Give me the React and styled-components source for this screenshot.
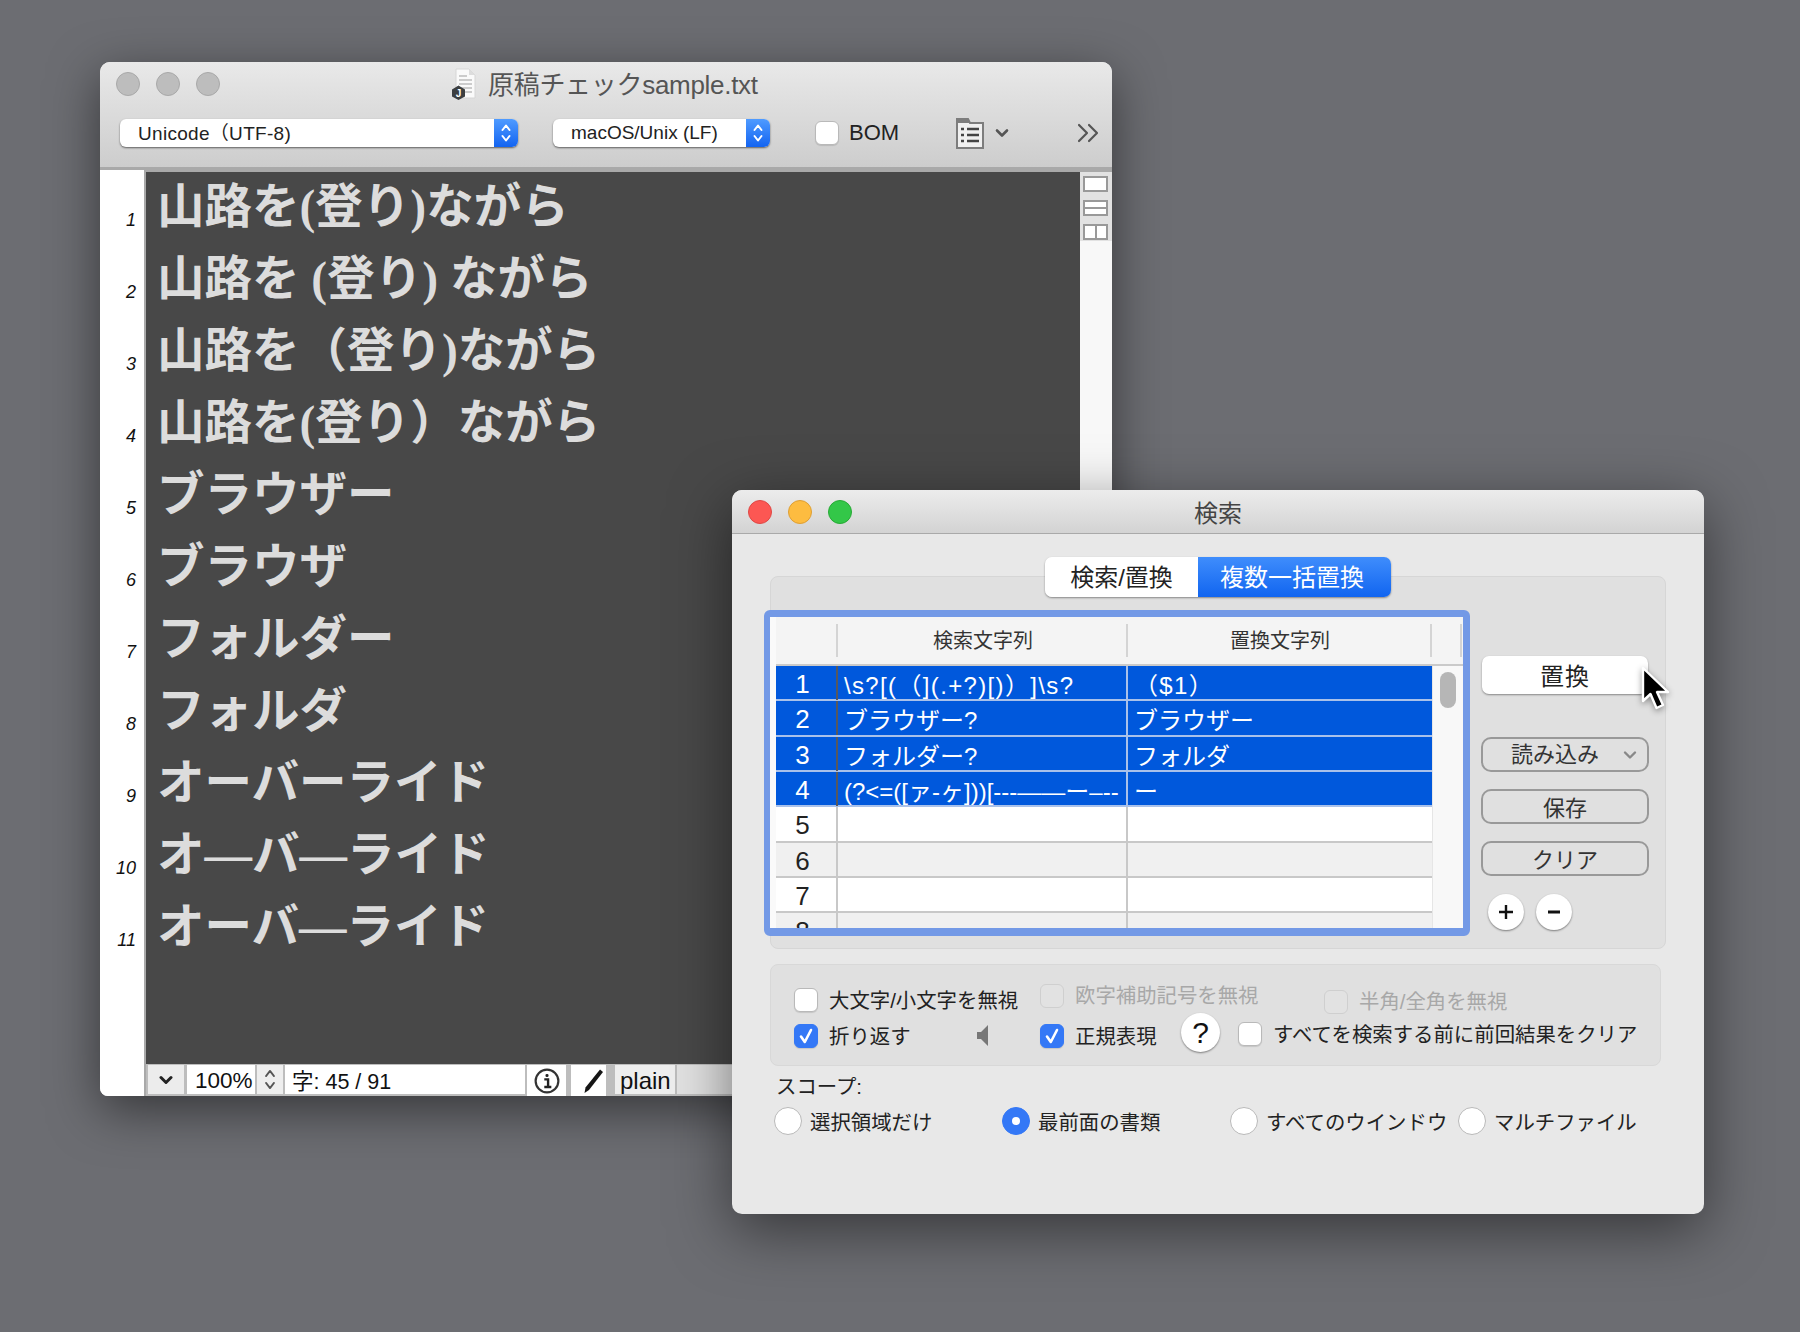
import React from "react";
import styled, { createGlobalStyle } from "styled-components";

const UI = `"Liberation Sans", "Noto Sans CJK JP", sans-serif`;

const Global = createGlobalStyle`
  html, body { margin: 0; padding: 0; background: #6c6d72; }
  * { box-sizing: border-box; text-spacing-trim: space-all; }
`;

const Stage = styled.div`
  position: relative;
  width: 1800px;
  height: 1332px;
  overflow: hidden;
  background: #6c6d72;
  font-family: ${UI};
  color: #222;
`;

/* ---------- main editor window ---------- */
const MainWindow = styled.div`
  position: absolute;
  left: 100px;
  top: 62px;
  width: 1012px;
  height: 1034px;
  display: flex;
  flex-direction: column;
  border-radius: 10px 10px 8px 8px;
  overflow: hidden;
  background: #f4f4f4;
`;
const MainShadow = styled.div`
  position: absolute;
  left: 100px;
  top: 62px;
  width: 1012px;
  height: 1034px;
  border-radius: 10px;
  box-shadow: 0 14px 50px rgba(0, 0, 0, 0.5);
`;
const Chrome = styled.div`
  height: 108px;
  flex: none;
  background: linear-gradient(#e9e9e9, #cdcdcd);
  border-bottom: 3px solid #a9a9a9;
`;
const TitleRow = styled.div`
  position: relative;
  height: 44px;
`;
const Lights = styled.div`
  position: absolute;
  left: 16px;
  top: 10px;
  display: flex;
  gap: ${(p) => p.$gap}px;
`;
const Light = styled.span`
  width: 24px;
  height: 24px;
  border-radius: 50%;
  background: ${(p) => p.$c};
  border: 1px solid ${(p) => p.$b};
`;
const TitleIcon = styled.svg`
  position: absolute;
  left: 351px;
  top: 6px;
`;
const TitleText = styled.div`
  position: absolute;
  left: 388px;
  top: 6px;
  font-size: 26px;
  line-height: 34px;
  letter-spacing: -0.3px;
  color: #555;
  white-space: nowrap;
`;
const Toolbar = styled.div`
  height: 54px;
  padding-left: 20px;
  display: flex;
  align-items: center;
`;
const Popup = styled.div`
  width: ${(p) => p.$w}px;
  height: 28px;
  margin-left: ${(p) => p.$ml || 0}px;
  flex: none;
  display: flex;
  align-items: center;
  justify-content: space-between;
  padding-left: 18px;
  background: #fff;
  border-radius: 6px;
  box-shadow: 0 1px 2px rgba(0, 0, 0, 0.55);
  font-size: 19px;
  color: #222;
  white-space: nowrap;
  overflow: hidden;
`;
const PopupText = styled.span`
  position: relative;
  top: ${(p) => p.$dy || 0}px;
  letter-spacing: ${(p) => p.$ls || 0}px;
`;
const Stepper = styled.span`
  width: 24px;
  height: 100%;
  display: flex;
  align-items: center;
  justify-content: center;
  background: linear-gradient(#4f9bff, #1364f1);
`;
const Check = styled.span`
  width: 24px;
  height: 24px;
  flex: none;
  display: flex;
  align-items: center;
  justify-content: center;
  border-radius: 6px;
  background: ${(p) => (p.$on ? "#3478f6" : p.$off ? "#e2e2e2" : "#fff")};
  border: 1px solid ${(p) => (p.$on ? "#3478f6" : p.$off ? "#cfcfcf" : "#b9b9b9")};
  box-shadow: ${(p) => (p.$off ? "none" : "0 1px 1px rgba(0,0,0,.12)")};
`;
const BomWrap = styled.div`
  margin-left: 45px;
  display: flex;
  align-items: center;
  gap: 10px;
  font-size: 22px;
  color: #222;
`;
const ToolIcon = styled.svg`
  margin-left: ${(p) => p.$ml}px;
  flex: none;
`;

const Body = styled.div`
  flex: 1;
  display: flex;
  min-height: 0;
`;
const Gutter = styled.div`
  width: 46px;
  flex: none;
  background: #fff;
  border-right: 2px solid #a9a9a9;
  padding-top: 14px;
`;
const LineNo = styled.div`
  height: 72px;
  padding-right: 8px;
  display: flex;
  align-items: center;
  justify-content: flex-end;
  font-size: 18px;
  font-style: italic;
  color: #111;
`;
const Content = styled.div`
  flex: 1;
  min-width: 0;
  display: flex;
  flex-direction: column;
`;
const Pane = styled.div`
  flex: 1;
  display: flex;
  min-height: 0;
  border-top: 2px solid #a9a9a9;
`;
const Editor = styled.div`
  flex: 1;
  background: #484848;
  padding: 0 0 0 11px;
  overflow: hidden;
`;
const EditorLine = styled.div`
  height: 72px;
  margin-top: ${(p) => (p.$first ? -1 : 0)}px;
  line-height: 72px;
  font-family: "Liberation Serif", "Noto Sans CJK JP", serif;
  font-weight: 700;
  font-size: 47.5px;
  color: #dcdcdc;
  white-space: pre;
`;
const SideBar = styled.div`
  width: 32px;
  flex: none;
  background: #f8f8f8;
`;
const SplitBox = styled.div`
  height: 69px;
  padding: 4px 4px 0 3px;
  background: #e2e2e2;
  display: flex;
  flex-direction: column;
  gap: 8px;
`;
const SplitIcon = styled.span`
  height: 16px;
  display: flex;
  flex-direction: ${(p) => (p.$v ? "row" : "column")};
  gap: 2px;
  background: #999;
  border: 2px solid #999;
`;
const SplitPart = styled.i`
  flex: 1;
  background: #fff;
`;
const StatusBar = styled.div`
  height: 32px;
  flex: none;
  display: flex;
  background: #bdbdbd;
  padding: 1px 0 0;
  color: #111;
`;
const StatusCell = styled.div`
  width: ${(p) => p.$w}px;
  margin-left: ${(p) => p.$ml}px;
  height: ${(p) => (p.$tall ? 31 : 29)}px;
  flex: none;
  display: flex;
  align-items: center;
  justify-content: ${(p) => (p.$center ? "center" : "flex-start")};
  padding-left: ${(p) => p.$pl || 0}px;
  padding-top: ${(p) => p.$pt || 0}px;
  background: ${(p) => p.$bg};
  font-size: ${(p) => p.$fs || 22}px;
  white-space: nowrap;
`;
const StatusRest = styled.div`
  flex: 1;
  height: 29px;
  margin-left: 2px;
  background: #e2e2e2;
`;

/* ---------- search dialog ---------- */
const Dialog = styled.div`
  position: absolute;
  left: 732px;
  top: 490px;
  width: 972px;
  height: 724px;
  border-radius: 10px;
  background: #e8e8e8;
  box-shadow: 0 16px 60px rgba(0, 0, 0, 0.5);
`;
const DialogBar = styled.div`
  position: relative;
  height: 44px;
  border-radius: 10px 10px 0 0;
  background: linear-gradient(#ececec, #d3d3d3);
  border-bottom: 1px solid #a9a9a9;
  display: flex;
  align-items: center;
  justify-content: center;
  font-size: 24px;
  color: #444;
`;
const Group = styled.div`
  position: absolute;
  left: 38px;
  top: 86px;
  width: 896px;
  height: 373px;
  border-radius: 8px;
  background: #e0e0e0;
  border: 1px solid #d6d6d6;
`;
const Tabs = styled.div`
  position: absolute;
  left: 313px;
  top: 67px;
  height: 40px;
  display: flex;
  border-radius: 7px;
  overflow: hidden;
  box-shadow: 0 1px 2px rgba(0, 0, 0, 0.4);
  font-size: 24px;
`;
const Tab = styled.div`
  width: ${(p) => p.$w}px;
  display: flex;
  align-items: center;
  justify-content: center;
  padding: 0 ${(p) => p.$pr || 0}px 4px 0;
  background: ${(p) => (p.$on ? "linear-gradient(#3f8dfc, #1165f0)" : "#fff")};
  color: ${(p) => (p.$on ? "#fff" : "#222")};
`;
const TableFrame = styled.div`
  position: absolute;
  left: 32px;
  top: 120px;
  width: 706px;
  height: 326px;
  border: solid #7399e6;
  border-width: 7px 7px 8px 6px;
  border-radius: 6px;
  background: #fafafa;
  padding-left: 6px;
  overflow: hidden;
`;
const HeadRow = styled.div`
  height: 49px;
  display: grid;
  grid-template-columns: 62px 290px 304px 30px 1fr;
  background: #f4f4f4;
  border-bottom: 2px solid #cacaca;
  font-size: 20px;
  color: #333;
`;
const HeadCell = styled.div`
  position: relative;
  display: flex;
  align-items: center;
  justify-content: center;
  padding-bottom: 2px;
  &::after {
    content: "";
    position: absolute;
    right: 0;
    top: 7px;
    bottom: 7px;
    width: 2px;
    background: #d4d4d4;
  }
`;
const TableBody = styled.div`
  display: flex;
  height: 262px;
  overflow: hidden;
`;
const Rows = styled.div`
  width: 656px;
  flex: none;
`;
const Row = styled.div`
  height: 35.33px;
  display: grid;
  grid-template-columns: 62px 290px 1fr;
  font-size: 24px;
  background: ${(p) => (p.$sel ? "#0058dc" : p.$alt ? "#f0f0f0" : "#fff")};
  color: ${(p) => (p.$sel ? "#fff" : "#222")};
  border-bottom: 2px solid ${(p) => (p.$sel ? "#a9c1ea" : "#c8c8c8")};
`;
const NumCell = styled.div`
  display: flex;
  align-items: center;
  justify-content: center;
  padding: 3px 7px 0 0;
  font-size: 26px;
  border-right: 2px solid ${(p) => (p.$sel ? "#56585e" : "#c8c8c8")};
`;
const TextCell = styled.div`
  display: flex;
  align-items: center;
  padding: 1px 0 0 ${(p) => p.$pl}px;
  overflow: hidden;
  white-space: pre;
  letter-spacing: ${(p) => p.$ls || 0}px;
  border-right: ${(p) => (p.$bar ? 2 : 0)}px solid ${(p) => (p.$sel ? "#a9c1ea" : "#c8c8c8")};
`;
const ScrollTrack = styled.div`
  flex: 1;
  background: #f8f8f8;
  border-left: 1px solid #e6e6e6;
  padding: 6px 0 0 7px;
`;
const ScrollThumb = styled.div`
  width: 16px;
  height: 36px;
  border-radius: 8px;
  background: #b6b6b6;
`;
const SideColumn = styled.div`
  position: absolute;
  left: 749px;
  top: 166px;
  width: 168px;
  display: flex;
  flex-direction: column;
`;
const DefaultButton = styled.div`
  height: 38px;
  margin: 0 1px 43px;
  display: flex;
  align-items: center;
  justify-content: center;
  padding-bottom: 2px;
  background: #fff;
  border-radius: 7px;
  box-shadow: 0 1px 2px rgba(0, 0, 0, 0.4);
  font-size: 24px;
  letter-spacing: 1px;
  color: #222;
`;
const OutlineButton = styled.div`
  position: relative;
  height: 35px;
  margin-bottom: 17px;
  display: flex;
  align-items: center;
  justify-content: center;
  padding: 0 ${(p) => (p.$menu ? 20 : 0)}px ${(p) => (p.$menu ? 5 : 2)}px 0;
  border: 2px solid #999;
  border-radius: 10px;
  font-size: 22px;
  color: #333;
`;
const MenuChevron = styled.svg`
  position: absolute;
  right: 10px;
  top: 11px;
`;
const RoundRow = styled.div`
  margin: 1px 0 0 7px;
  display: flex;
  gap: 12px;
`;
const RoundButton = styled.div`
  width: ${(p) => p.$d || 36}px;
  height: ${(p) => p.$d || 36}px;
  display: flex;
  align-items: center;
  justify-content: center;
  border-radius: 50%;
  background: #fff;
  box-shadow: 0 1px 2px rgba(0, 0, 0, 0.45);
  color: #111;
`;
const CursorArrow = styled.svg`
  position: absolute;
  left: 907px;
  top: 175px;
  filter: drop-shadow(0 2px 3px rgba(0, 0, 0, 0.4));
`;
const OptionsBox = styled.div`
  position: absolute;
  left: 38px;
  top: 474px;
  width: 891px;
  height: 102px;
  border-radius: 8px;
  background: #e0e0e0;
  border: 1px solid #d8d8d8;
`;
const Option = styled.label`
  position: absolute;
  left: ${(p) => p.$x}px;
  top: ${(p) => p.$y}px;
  display: flex;
  align-items: center;
  gap: ${(p) => p.$gap || 11}px;
  font-size: 20.4px;
  line-height: 24px;
  white-space: nowrap;
  color: ${(p) => (p.$off ? "#a8a8a8" : "#222")};
`;
const OptionText = styled.span`
  position: relative;
  top: ${(p) => p.$dy || 0}px;
`;
const Placed = styled.div`
  position: absolute;
  left: ${(p) => p.$x}px;
  top: ${(p) => p.$y}px;
  display: flex;
`;
const ScopeLabel = styled.div`
  position: absolute;
  left: 44px;
  top: 585px;
  font-size: 20.4px;
  line-height: 24px;
  color: #222;
`;
const Radio = styled.span`
  width: 28px;
  height: 28px;
  flex: none;
  display: flex;
  align-items: center;
  justify-content: center;
  border-radius: 50%;
  background: ${(p) => (p.$on ? "#3478f6" : "#fff")};
  border: 1px solid ${(p) => (p.$on ? "#3478f6" : "#b9b9b9")};
  &::after {
    content: "";
    width: 8px;
    height: 8px;
    border-radius: 50%;
    background: ${(p) => (p.$on ? "#fff" : "transparent")};
  }
`;
const Question = styled.span`
  font-size: 30px;
  line-height: 1;
  color: #111;
`;

/* ---------- small drawings ---------- */
const Updown = ({ c = "#fff", w = 14, h = 22, sw = 2 }) => (
  <svg width={w} height={h} viewBox="0 0 14 22" fill="none" stroke={c} strokeWidth={sw} strokeLinecap="round" strokeLinejoin="round">
    <path d="M3.5 8 7 3.5 10.5 8" />
    <path d="M3.5 14 7 18.5 10.5 14" />
  </svg>
);
const Tick = () => (
  <svg width="16" height="18" viewBox="0 0 16 18" fill="none" stroke="#fff" strokeWidth="2.6" strokeLinecap="round" strokeLinejoin="round">
    <path d="M3 9.5 6.8 15 13 3" />
  </svg>
);
const DocIcon = () => (
  <TitleIcon width="26" height="32" viewBox="0 0 26 32">
    <path d="M5 1h13l6 6v23H5z" fill="#fafafa" stroke="#d6d6d6" />
    <path d="M18 1v6h6" fill="#ddd" />
    <path d="M8 8h8M8 12h13M8 16h13M8 20h13M13 24h8" stroke="#bdbdbd" strokeWidth="1.5" />
    <path d="M7.5 17.5 14 21.5v7L7.5 32 1 28.5v-7z" fill="#3c3f41" />
    <text x="7.5" y="29" fontSize="10" fontWeight="700" fill="#fff" textAnchor="middle" fontFamily="Liberation Sans">J</text>
  </TitleIcon>
);
const ListIcon = () => (
  <ToolIcon $ml={57} width="28" height="31" viewBox="0 0 28 31">
    <path d="M1 30V1h11l2 4h13v25z" fill="#f0f0f0" stroke="#7d7d7d" strokeWidth="2" />
    <path d="M1 1h11l2 4H1z" fill="#7d7d7d" />
    <path d="M5 11h3M11 11h12M5 17h3M11 17h12M5 23h3M11 23h12" stroke="#444" strokeWidth="2.4" />
  </ToolIcon>
);
const ChevronDown = ({ ml, c = "#555", w = 14, h = 10, sw = 2.6 }) => (
  <ToolIcon $ml={ml} width={w} height={h} viewBox="0 0 14 10" fill="none" stroke={c} strokeWidth={sw} strokeLinecap="round" strokeLinejoin="round">
    <path d="M2 2.5 7 7.5 12 2.5" />
  </ToolIcon>
);
const MoreIcon = () => (
  <ToolIcon $ml={68} width="22" height="20" viewBox="0 0 22 20" fill="none" stroke="#555" strokeWidth="2.2" strokeLinecap="round" strokeLinejoin="round">
    <path d="M2 2 10 10 2 18M12 2 20 10 12 18" />
  </ToolIcon>
);
const InfoIcon = () => (
  <svg width="26" height="26" viewBox="0 0 24 24" fill="none">
    <circle cx="12" cy="12" r="10.5" stroke="#333" strokeWidth="2" />
    <rect x="10.6" y="5.5" width="2.8" height="2.8" rx="1.2" fill="#222" />
    <path d="M9.5 10.5H13V17M9.5 17.5h6.5" stroke="#222" strokeWidth="2.2" />
  </svg>
);
const PenIcon = () => (
  <svg width="22" height="28" viewBox="0 0 22 26">
    <path d="M18 1.5 21 4 7 22 2.5 25 3.5 19.5z" fill="#151515" />
  </svg>
);
const Speaker = () => (
  <svg width="11" height="21" viewBox="0 0 11 21">
    <path d="M0 7h4l7-7v21l-7-7H0z" fill="#777" />
  </svg>
);

const lines = [
  "山路を(登り)ながら",
  "山路を (登り) ながら",
  "山路を（登り)ながら",
  "山路を(登り）ながら",
  "ブラウザー",
  "ブラウザ",
  "フォルダー",
  "フォルダ",
  "オーバーライド",
  "オ―バ―ライド",
  "オーバ―ライド",
];

const rows = [
  ["1", "\\s?[(（](.+?)[)）]\\s?", "（$1）", 1.35],
  ["2", "ブラウザー?", "ブラウザー", 0],
  ["3", "フォルダー?", "フォルダ", 0],
  ["4", "(?<=([ァ-ヶ]))[---——ー–--", "ー", 0],
  ["5", "", "", 0],
  ["6", "", "", 0],
  ["7", "", "", 0],
  ["8", "", "", 0],
];

export default function App() {
  return (
    <Stage>
      <Global />
      <MainShadow />
      <MainWindow>
        <Chrome>
          <TitleRow>
            <Lights $gap={16}>
              <Light $c="#bdbdbd" $b="#a8a8a8" />
              <Light $c="#bdbdbd" $b="#a8a8a8" />
              <Light $c="#bdbdbd" $b="#a8a8a8" />
            </Lights>
            <DocIcon />
            <TitleText>原稿チェックsample.txt</TitleText>
          </TitleRow>
          <Toolbar>
            <Popup $w={398}>
              <PopupText $dy={-2} $ls={0.3}>Unicode（UTF-8)</PopupText>
              <Stepper><Updown /></Stepper>
            </Popup>
            <Popup $w={217} $ml={35}>
              <PopupText>macOS/Unix (LF)</PopupText>
              <Stepper><Updown /></Stepper>
            </Popup>
            <BomWrap>
              <Check />
              BOM
            </BomWrap>
            <ListIcon />
            <ChevronDown ml={11} />
            <MoreIcon />
          </Toolbar>
        </Chrome>
        <Body>
          <Gutter>
            {lines.map((_, i) => (
              <LineNo key={i}>{i + 1}</LineNo>
            ))}
          </Gutter>
          <Content>
            <Pane>
              <Editor>
                {lines.map((t, i) => (
                  <EditorLine key={i} $first={i === 0}>{t}</EditorLine>
                ))}
              </Editor>
              <SideBar>
                <SplitBox>
                  <SplitIcon><SplitPart /></SplitIcon>
                  <SplitIcon><SplitPart /><SplitPart /></SplitIcon>
                  <SplitIcon $v><SplitPart /><SplitPart /></SplitIcon>
                </SplitBox>
              </SideBar>
            </Pane>
            <StatusBar>
              <StatusCell $w={36} $ml={2} $bg="#ececec" $center><ChevronDown ml={0} c="#222" sw={3} /></StatusCell>
              <StatusCell $w={68} $ml={3} $bg="#fff" $pl={8} $pt={2} $fs={22.5}>100%</StatusCell>
              <StatusCell $w={26} $ml={2} $bg="#eeeeee" $center><Updown c="#555" w={16} h={27} sw={1.6} /></StatusCell>
              <StatusCell $w={240} $ml={2} $bg="#fff" $pl={7} $fs={21.5}>字: 45 / 91</StatusCell>
              <StatusCell $w={39} $ml={2} $bg="#fff" $pl={1} $center $tall><InfoIcon /></StatusCell>
              <StatusCell $w={35} $ml={5} $bg="#fff" $pl={8} $center $tall><PenIcon /></StatusCell>
              <StatusCell $w={60} $ml={9} $bg="#eeeeee" $pl={5} $pt={3} $fs={24}>plain</StatusCell>
              <StatusRest />
            </StatusBar>
          </Content>
        </Body>
      </MainWindow>

      <Dialog>
        <DialogBar>
          <Lights $gap={16}>
            <Light $c="#fc5753" $b="#df4744" />
            <Light $c="#fdbc40" $b="#de9f34" />
            <Light $c="#33c748" $b="#27aa35" />
          </Lights>
          検索
        </DialogBar>
        <Group />
        <Tabs>
          <Tab $w={153}>検索/置換</Tab>
          <Tab $w={193} $pr={5} $on>複数一括置換</Tab>
        </Tabs>
        <TableFrame>
          <HeadRow>
            <HeadCell />
            <HeadCell>検索文字列</HeadCell>
            <HeadCell>置換文字列</HeadCell>
            <HeadCell />
          </HeadRow>
          <TableBody>
            <Rows>
              {rows.map(([n, a, b, ls], i) => {
                const sel = i < 4;
                return (
                  <Row key={n} $sel={sel} $alt={i % 2 === 1 && !sel}>
                    <NumCell $sel={sel}>{n}</NumCell>
                    <TextCell $sel={sel} $bar $pl={6} $ls={ls}>{a}</TextCell>
                    <TextCell $sel={sel} $pl={6} $ls={ls}>{b}</TextCell>
                  </Row>
                );
              })}
            </Rows>
            <ScrollTrack><ScrollThumb /></ScrollTrack>
          </TableBody>
        </TableFrame>
        <SideColumn>
          <DefaultButton>置換</DefaultButton>
          <OutlineButton $menu>
            読み込み
            <MenuChevron width="14" height="10" viewBox="0 0 14 10" fill="none" stroke="#888" strokeWidth="2.4" strokeLinecap="round" strokeLinejoin="round">
              <path d="M2 2.5 7 7.5 12 2.5" />
            </MenuChevron>
          </OutlineButton>
          <OutlineButton>保存</OutlineButton>
          <OutlineButton>クリア</OutlineButton>
          <RoundRow>
            <RoundButton>
              <svg width="16" height="16" viewBox="0 0 16 16"><path d="M8 1v14M1 8h14" stroke="#111" strokeWidth="2.4" /></svg>
            </RoundButton>
            <RoundButton>
              <svg width="12" height="4" viewBox="0 0 12 4"><path d="M0 2h12" stroke="#111" strokeWidth="3" /></svg>
            </RoundButton>
          </RoundRow>
        </SideColumn>
        <CursorArrow width="32" height="46" viewBox="0 0 32 46">
          <path d="M4 3V36L11.5 29 17.5 43 24 40 18 27H29Z" fill="#000" stroke="#fff" strokeWidth="2.4" strokeLinejoin="round" />
        </CursorArrow>

        <OptionsBox>
          <Option $x={23} $y={23}><Check /><OptionText $dy={1}>大文字/小文字を無視</OptionText></Option>
          <Option $x={269} $y={19} $off><Check $off /><OptionText>欧字補助記号を無視</OptionText></Option>
          <Option $x={553} $y={25} $off><Check $off /><OptionText>半角/全角を無視</OptionText></Option>
          <Option $x={23} $y={59}><Check $on><Tick /></Check><OptionText $dy={1}>折り返す</OptionText></Option>
          <Placed $x={206} $y={60}><Speaker /></Placed>
          <Option $x={269} $y={59}><Check $on><Tick /></Check><OptionText $dy={1}>正規表現</OptionText></Option>
          <Placed $x={410} $y={48}>
            <RoundButton $d={39}><Question>?</Question></RoundButton>
          </Placed>
          <Option $x={467} $y={57}><Check /><OptionText $dy={1}>すべてを検索する前に前回結果をクリア</OptionText></Option>
        </OptionsBox>
        <ScopeLabel>スコープ:</ScopeLabel>
        <Option $x={42} $y={617} $gap={8}><Radio /><OptionText $dy={2}>選択領域だけ</OptionText></Option>
        <Option $x={270} $y={617} $gap={8}><Radio $on /><OptionText $dy={2}>最前面の書類</OptionText></Option>
        <Option $x={498} $y={617} $gap={8}><Radio /><OptionText $dy={2}>すべてのウインドウ</OptionText></Option>
        <Option $x={726} $y={617} $gap={8}><Radio /><OptionText $dy={2}>マルチファイル</OptionText></Option>
      </Dialog>
    </Stage>
  );
}
